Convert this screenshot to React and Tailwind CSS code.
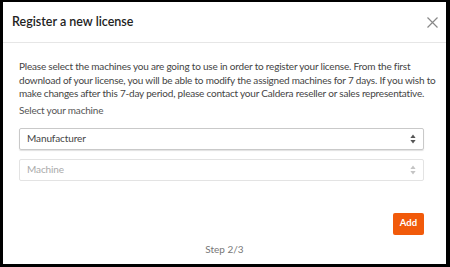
function Chevrons({ light }) {
  const c = light ? "#c4c4c4" : "#555";
  return (
    <svg width="6" height="10" viewBox="0 0 6 10">
      <path d="M3 0.5 L5.6 4 H0.4 Z" fill={c} />
      <path d="M3 9.5 L5.6 6 H0.4 Z" fill={c} />
    </svg>
  );
}

export default function App() {
  return (
    <div
      className="w-[450px] h-[267px] bg-white border-black border-t-[2px] border-l-[3px] border-r-[4px] border-b-[3px] flex flex-col text-[#333]"
      style={{ fontFamily: 'Lato, "Noto Sans", sans-serif' }}
    >
      {/* Header */}
      <div className="h-[41px] shrink-0 flex items-center justify-between pl-[9px] pr-[8px] border-b border-[#e6e6e6]">
        <h2 className="text-[12.5px] font-semibold text-[#222]">Register a new license</h2>
        <button className="text-[#888]">
          <svg width="11" height="11" viewBox="0 0 11 11" stroke="currentColor" strokeWidth="1.2">
            <path d="M0.5 0.5 L10.5 10.5 M10.5 0.5 L0.5 10.5" />
          </svg>
        </button>
      </div>

      {/* Body */}
      <div className="flex-1 flex flex-col pl-[16px] pr-[10px] pt-[17px]">
        <p className="text-[10px] leading-[13.5px] text-[#444] tracking-[-0.2px]">
          Please select the machines you are going to use in order to register your license. From the first download of your license, you will be able to modify the assigned machines for 7 days. If you wish to make changes after this 7-day period, please contact your Caldera reseller or sales representative.
        </p>
        <p className="text-[10px] leading-[14px] text-[#555] mt-[2px] tracking-[-0.2px]">Select your machine</p>

        <div className="mt-[11px] mr-[12px] h-[22px] shrink-0 border border-[#c9c9c9] rounded-[2px] flex items-center justify-between pl-[7px] pr-[7px] shadow-[0_1px_1px_rgba(0,0,0,0.12)]">
          <span className="text-[10px] text-[#444] tracking-[-0.1px]">Manufacturer</span>
          <Chevrons />
        </div>
        <div className="mt-[9px] mr-[12px] h-[22px] shrink-0 border border-[#e3e3e3] rounded-[2px] flex items-center justify-between pl-[7px] pr-[7px]">
          <span className="text-[10px] text-[#aaa] tracking-[-0.1px]">Machine</span>
          <Chevrons light />
        </div>

        <div className="flex justify-end mt-[32px] mr-[12px]">
          <button className="w-[31px] h-[22px] bg-[#f15a0a] rounded-[2px] text-white text-[9.5px] font-bold">Add</button>
        </div>

        <div className="text-center text-[10px] leading-[14px] text-[#777] mt-[7px] mr-[6px]">Step 2/3</div>
      </div>
    </div>
  );
}
